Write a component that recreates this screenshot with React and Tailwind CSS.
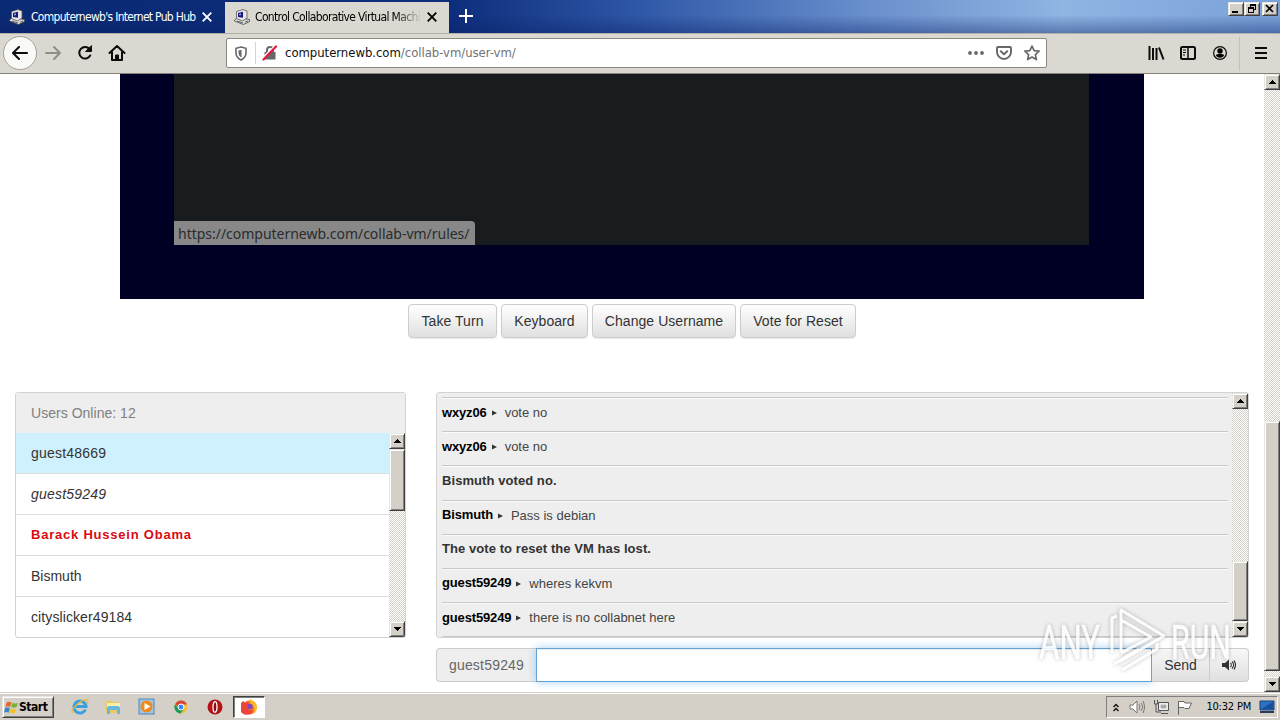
import { clsx } from 'clsx';

const users = [
  { name: 'guest48669', style: 'bg-[#cff1fd] text-[#333] tracking-[0.2px]' },
  { name: 'guest59249', style: 'italic text-[#333] tracking-[0.2px]' },
  { name: 'Barack Hussein Obama', style: 'font-bold text-[#d90a10] text-[13px] tracking-[0.78px]' },
  { name: 'Bismuth', style: 'text-[#333]' },
  { name: 'cityslicker49184', style: 'text-[#333] tracking-[0.1px]' },
];

const messages = [
  { user: 'wxyz06', text: 'vote no' },
  { user: 'wxyz06', text: 'vote no' },
  { notice: 'Bismuth voted no.' },
  { user: 'Bismuth', text: 'Pass is debian' },
  { notice: 'The vote to reset the VM has lost.' },
  { user: 'guest59249', text: 'wheres kekvm' },
  { user: 'guest59249', text: 'there is no collabnet here' },
];

const buttons = [
  { label: 'Take Turn', width: 'w-[89px]' },
  { label: 'Keyboard', width: 'w-[87px]' },
  { label: 'Change Username', width: 'w-[144px]' },
  { label: 'Vote for Reset', width: 'w-[116px]' },
];

const bevel = 'bg-[#d4d0c8] border border-t-[#e8e6e0] border-l-[#e8e6e0] border-r-[#404040] border-b-[#404040] shadow-[inset_1px_1px_0_#fff,inset_-1px_-1px_0_#808080]';

function ArrowButton({ down }) {
  return (
    <div className={clsx('h-4 w-4 shrink-0 flex items-center justify-center', bevel)}>
      <svg width="7" height="4" viewBox="0 0 7 4" shapeRendering="crispEdges">
        <path d={down ? 'M0 0h7v1H6v1H5v1H4v1H3V3H2V2H1V1H0z' : 'M3 0h1v1h1v1h1v1h1v1H0V3h1V2h1V1h1z'} />
      </svg>
    </div>
  );
}

function Scrollbar({ before, thumb, className }) {
  return (
    <div className={clsx('w-4 shrink-0 flex flex-col bg-[repeating-conic-gradient(#d4d0c8_0_25%,#fff_0_50%)] bg-[length:2px_2px]', className)}>
      <ArrowButton />
      <div className={before} />
      <div className={clsx('shrink-0', bevel, thumb)} />
      <div className="flex-1" />
      <ArrowButton down />
    </div>
  );
}

function ComputerIcon() {
  return (
    <svg className="shrink-0" width="16" height="16" viewBox="0 0 16 16">
      <path d="M.5 11l3-2.500 12 2v2l-6 3-9-3.500z" fill="#dcdcdc" stroke="#444" strokeWidth=".8" />
      <path d="M2.500 2.500L9 .5l4 1.500v7l-4.500 3-6-2.500z" fill="#e6e6e6" stroke="#555" strokeWidth=".8" />
      <path d="M4 4l5-1.200v6L4 8z" fill="#17177c" />
      <path d="M5 5l2-.7v2H5z" fill="#8fa2e8" />
      <path d="M3 12l6 2M11 13l3-1" stroke="#666" />
    </svg>
  );
}

function CloseIcon({ className }) {
  return (
    <svg className={clsx('shrink-0', className)} width="10" height="10" viewBox="0 0 10 10" fill="none" stroke="currentColor" strokeWidth="1.8">
      <path d="M.7.7l8.600 8.600M9.300.7L.7 9.300" />
    </svg>
  );
}

function TabBar() {
  return (
    <div className="h-[33px] flex bg-[linear-gradient(to_bottom,transparent_45%,rgba(10,30,100,0.4)),linear-gradient(to_right,#0b2a74_0%,#0c2d7b_35%,#2f58a8_50%,#6a90cd_68%,#8fb5e3_83%,#7aa2d9_100%)]">
      <div className="w-[225px] flex items-center pl-[9px] text-white">
        <ComputerIcon />
        <span className="ml-[6px] w-[167px] text-[12px] tracking-[-0.7px] whitespace-nowrap font-['DejaVu_Sans_Condensed','DejaVu_Sans',sans-serif] [font-stretch:condensed]">Computernewb's Internet Pub Hub</span>
        <CloseIcon className="ml-[4px]" />
      </div>
      <div className="w-[224px] mt-[2px] flex items-center pb-[2px] pl-[9px] bg-[#dbd8d1]">
        <ComputerIcon />
        <span className="ml-[5px] w-[167px] text-[12px] tracking-[-0.65px] whitespace-nowrap overflow-hidden font-['DejaVu_Sans_Condensed','DejaVu_Sans',sans-serif] [font-stretch:condensed] [mask-image:linear-gradient(to_right,black_84%,transparent)]">Control Collaborative Virtual Machi</span>
        <CloseIcon className="ml-[5px]" />
      </div>
      <svg className="ml-[10px] mt-[9px]" width="14" height="14" viewBox="0 0 14 14" stroke="#fff" strokeWidth="2">
        <path d="M7 0v14M0 7h14" />
      </svg>
      <div className="ml-auto mr-[2px] mt-[2px] flex h-[14px]">
        <div className={clsx('w-4', bevel)}>
          <svg width="14" height="12" viewBox="0 0 14 12"><path d="M3 8h6v2H3z" /></svg>
        </div>
        <div className={clsx('w-4', bevel)}>
          <svg width="14" height="12" viewBox="0 0 14 12" shapeRendering="crispEdges">
            <path d="M5 1h6v2H5zM10 3h1v4h-1zM9 6h1v1H9zM5 3h1v1H5zM3 4h6v2H3zM3 6h1v4H3zM8 6h1v4H8zM4 9h4v1H4z" />
          </svg>
        </div>
        <div className={clsx('w-4 ml-[2px]', bevel)}>
          <svg width="14" height="12" viewBox="0 0 14 12" stroke="#000" strokeWidth="1.7"><path d="M3 2l7 7M10 2L3 9" /></svg>
        </div>
      </div>
    </div>
  );
}

function Toolbar() {
  return (
    <div className="h-[41px] shrink-0 flex items-center bg-[#dbd8d1] border-t border-b border-t-[#b3b0aa] border-b-[#84817b]">
      <div className="ml-[3px] mt-[-1px] size-[34px] rounded-full border border-[#a5a29c] bg-[#f9f9f8] flex items-center justify-center">
        <svg width="16" height="14" viewBox="0 0 16 14" fill="none" stroke="#0c0c0d" strokeWidth="2" strokeLinecap="round" strokeLinejoin="round"><path d="M15 7H1.500M7 1L1 7l6 6" /></svg>
      </div>
      <svg className="ml-[8px] mt-[-1px]" width="16" height="14" viewBox="0 0 16 14" fill="none" stroke="#908e89" strokeWidth="2" strokeLinecap="round" strokeLinejoin="round"><path d="M1 7h13.500M9 1l6 6-6 6" /></svg>
      <svg className="ml-[16px] mt-[-1px]" width="16" height="16" viewBox="0 0 16 16" fill="none" stroke="#0c0c0d" strokeWidth="2" strokeLinecap="round">
        <path d="M13.200 10.500A5.800 5.800 0 1 1 12.500 4" />
        <path d="M14.500 1v5.500H9z" fill="#0c0c0d" strokeWidth="1" strokeLinejoin="round" />
      </svg>
      <svg className="ml-[15px] mt-[-1px]" width="18" height="16" viewBox="0 0 18 16" fill="none" stroke="#0c0c0d" strokeWidth="2" strokeLinecap="round" strokeLinejoin="round">
        <path d="M1.500 8L9 1l7.500 7M4 7v8h10V7" />
        <path d="M7.500 15v-5h3v5" fill="#0c0c0d" strokeWidth="1" />
      </svg>

      <div className="ml-[100px] mt-[-1px] w-[821px] h-[30px] flex items-center rounded-[2px] border border-[#8c8983] bg-white">
        <svg className="ml-[8px]" width="12" height="15" viewBox="0 0 12 15" fill="none" stroke="#68686b" strokeWidth="1.6">
          <path d="M6 1l5 1.300V7c0 3.500-2 5.500-5 7-3-1.500-5-3.500-5-7V2.300z" />
          <path d="M6 4v7c-2-1-2.500-2.500-2.500-4V4.500z" fill="#68686b" stroke="none" />
          <path d="M6 4v7" strokeWidth="1" />
        </svg>
        <div className="ml-[8px] h-[22px] w-px bg-[#d5d5d5]" />
        <svg className="ml-[6px]" width="16" height="16" viewBox="0 0 16 16">
          <path d="M5 7V5a3 3 0 0 1 6 0v2" fill="none" stroke="#68686b" strokeWidth="2" />
          <path d="M2.500 7h11v7.500h-11z" fill="#68686b" />
          <path d="M0 14L13 1" stroke="#fff" strokeWidth="2" />
          <path d="M1.500 14.500L14 1.500" stroke="#e5183f" strokeWidth="2.200" strokeLinecap="round" />
        </svg>
        <div className="ml-[7px] text-[13px] tracking-[-0.04px] whitespace-nowrap font-['DejaVu_Sans_Condensed','DejaVu_Sans',sans-serif] [font-stretch:condensed] text-[#737373]">
          <span className="text-[#111]">computernewb.com</span>/collab-vm/user-vm/
        </div>
        <svg className="ml-auto" width="16" height="4" viewBox="0 0 16 4" fill="#68686b">
          <circle cx="2" cy="2" r="1.900" />
          <circle cx="8" cy="2" r="1.900" />
          <circle cx="14" cy="2" r="1.900" />
        </svg>
        <svg className="ml-[12px]" width="16" height="14" viewBox="0 0 16 14" fill="none" stroke="#68686b" strokeWidth="1.900" strokeLinecap="round" strokeLinejoin="round">
          <path d="M2 1h12a1 1 0 0 1 1 1v4a7 7 0 0 1-14 0V2a1 1 0 0 1 1-1z" />
          <path d="M4.800 5.200L8 8.300l3.200-3.100" />
        </svg>
        <svg className="ml-[12px] mr-[6px]" width="16" height="16" viewBox="0 0 16 16" fill="none" stroke="#68686b" strokeWidth="1.700" strokeLinejoin="round">
          <path d="M8 1l2.100 4.600 5 .6-3.700 3.400 1 5L8 12.100l-4.400 2.500 1-5L.9 6.200l5-.6z" />
        </svg>
      </div>

      <svg className="ml-auto mt-[-1px]" width="17" height="14" viewBox="0 0 17 14" stroke="#0c0c0d" strokeWidth="2">
        <path d="M1.500 0v14M5 2v12M8.500 2v12M11 1.500l4.500 12" />
      </svg>
      <svg className="ml-[15px] mt-[-1px]" width="16" height="14" viewBox="0 0 16 14" fill="none" stroke="#0c0c0d" strokeWidth="2">
        <rect x="1" y="1" width="14" height="12" rx="1.500" />
        <path d="M8 1v12" strokeWidth="1.500" />
        <path d="M3 4h3M3 6.500h3M3 9h2" strokeWidth="1" />
      </svg>
      <svg className="ml-[17px] mt-[-1px]" width="14" height="14" viewBox="0 0 14 14">
        <circle cx="7" cy="7" r="6.400" fill="none" stroke="#0c0c0d" strokeWidth="1.200" />
        <circle cx="7" cy="5" r="2.700" />
        <path d="M2.800 9c2-1.200 6.400-1.200 8.400 0-.7 1.700-2.500 2.800-4.200 2.800S3.500 10.700 2.800 9z" />
      </svg>
      <div className="ml-[12px] h-[34px] w-px bg-[#c4c1ba]" />
      <svg className="ml-[15px] mr-[13px] mt-[-1px]" width="12" height="12" viewBox="0 0 12 12" stroke="#0c0c0d" strokeWidth="2"><path d="M0 1h12M0 6h12M0 11h12" /></svg>
    </div>
  );
}

function UserList() {
  return (
    <div className="w-[391px] h-[246px] flex flex-col rounded-[3px] border border-[#d3d3d3] overflow-hidden text-sm">
      <div className="h-10 shrink-0 pl-[15px] flex items-center bg-[#eee] text-[#808080] tracking-[0.03px]">Users Online: 12</div>
      <div className="flex-1 flex min-h-0">
        <div className="flex-1">
          {users.map((user) => (
            <div key={user.name} className={clsx('h-[41px] pl-[15px] flex items-center border-b border-[#ddd]', user.style)}>{user.name}</div>
          ))}
        </div>
        <Scrollbar thumb="h-[62px]" />
      </div>
    </div>
  );
}

function Chat() {
  return (
    <div className="w-[813px]">
      <div className="h-[246px] flex rounded-[3px] border border-[#d3d3d3] bg-[#eee] overflow-hidden text-[13px]">
        <div className="flex-1 pl-[5px] pr-[4px] pt-[4px]">
          {messages.map((message, i) => (
            <div key={i} className="h-[34.200px] pt-[5px] border-t border-[#c8c8c8] shadow-[inset_0_1px_0_#fafafa] whitespace-nowrap">
              {message.notice ? (
                <b className="block mt-[-0.500px] text-[#333] text-[13px] tracking-[0.07px]">{message.notice}</b>
              ) : (
                <div className="flex">
                  <b className="mt-[-0.500px] text-black tracking-[-0.15px]">{message.user}</b>
                  <svg className="ml-[5px] mt-[7px]" width="5" height="6" viewBox="0 0 5 6" fill="#333"><path d="M0 .5L5 3 0 5.500z" /></svg>
                  <span className="ml-[8px] text-[#444]">{message.text}</span>
                </div>
              )}
            </div>
          ))}
          <div className="h-px bg-[#c8c8c8]" />
        </div>
        <Scrollbar before="h-[152px]" thumb="h-[60px]" />
      </div>
      <div className="mt-[10px] h-[34px] flex text-sm">
        <div className="w-[100px] rounded-l-[4px] border border-r-0 border-[#ccc] bg-[#eee] flex items-center justify-center text-[#666] tracking-[0.2px]">guest59249</div>
        <div className="w-[616px] border border-[#66a3d2] bg-white shadow-[0_0_8px_rgba(102,175,233,0.6),inset_0_1px_1px_rgba(0,0,0,0.08)]" />
        <div className="w-[58px] border-y border-r border-[#ccc] bg-gradient-to-b from-[#f7f7f7] to-[#e0e0e0] flex items-center justify-center text-[#333]">Send</div>
        <div className="w-[39px] rounded-r-[4px] border border-l-0 border-[#ccc] bg-gradient-to-b from-[#f7f7f7] to-[#e0e0e0] flex items-center justify-center">
          <svg width="14" height="12" viewBox="0 0 14 12" fill="none" stroke="#333" strokeWidth="1.200">
            <path d="M0 4h3l4-3.500v11L3 8H0z" fill="#333" stroke="none" />
            <path d="M8.500 4c1 1 1 3 0 4M10 2.500c2 2 2 5 0 7M12 1.500c2 3 2 6 0 9" />
          </svg>
        </div>
      </div>
    </div>
  );
}

function Watermark() {
  return (
    <svg className="absolute left-[1034px] top-[604px] opacity-85 drop-shadow-[0_0_2px_rgba(0,0,0,0.3)]" width="204" height="72" viewBox="0 0 204 72" fill="none" stroke="#fff" strokeWidth="3" strokeLinejoin="round">
      <text x="5" y="55" textLength="61" lengthAdjust="spacingAndGlyphs" className="font-[Roboto,sans-serif] text-[49px]" fill="#fff" strokeWidth=".5">ANY</text>
      <text x="137" y="55" textLength="60" lengthAdjust="spacingAndGlyphs" className="font-[Roboto,sans-serif] text-[49px]" fill="#fff" strokeWidth=".5">RUN</text>
      <path d="M78 49V14l5-2M87 48V6l43 26-45 26M87 16l30 17-30 16M80 60l25-15M88 66l35-21v-6" />
    </svg>
  );
}

function Taskbar() {
  return (
    <div className="h-[28px] shrink-0 flex items-center bg-[#d4d0c8] border-t border-[#d4d0c8] shadow-[inset_0_1px_0_#fff]">
      <div className={clsx('ml-[2px] mt-[1px] w-[52px] h-[22px] flex items-center pl-[1px]', bevel)}>
        <svg className="shrink-0" width="15" height="15" viewBox="0 0 16 15">
          <path d="M3 2c2-1 3-1 5 0L6.500 7c-2-1-3-1-5 0z" fill="#ea6427" />
          <path d="M9 2.500c2 1 4 1 6 0L13.500 7c-2 1-4 1-6 0z" fill="#78b43c" />
          <path d="M1.200 8c2-1 3-1 5 0L5 13c-2-1-3-1-5 0z" fill="#3a86cc" />
          <path d="M7.200 8.500c2 1 4 1 6 0L11.700 13c-2 1-4 1-6 0z" fill="#f5bf28" />
        </svg>
        <span className="text-[12px] font-bold tracking-[-0.45px] font-['DejaVu_Sans_Condensed','DejaVu_Sans',sans-serif] [font-stretch:condensed]">Start</span>
      </div>
      <svg className="ml-[17px]" width="18" height="17" viewBox="0 0 18 17" fill="none">
        <path d="M14.500 11.500A6 6 0 1 1 15 8.500H5" stroke="#3ba1dc" strokeWidth="3" />
        <path d="M1.500 15C-1 12 11 0 16.500 2c1 1 0 3-.5 4" stroke="#e8b83a" strokeWidth="1.300" />
      </svg>
      <svg className="ml-[16px]" width="17" height="16" viewBox="0 0 17 16">
        <path d="M1 2h6l1 1h7v11H1z" fill="#ebc961" />
        <path d="M2 4h13v4H2z" fill="#fbefb0" />
        <path d="M2 15V9c0-1 1-2 2-2h9c1 0 2 1 2 2v6h-3v-4H5v4z" fill="#67b9df" />
      </svg>
      <svg className="ml-[16px]" width="17" height="17" viewBox="0 0 17 17">
        <rect x="1" y="1" width="15" height="15" fill="#9dc5e7" stroke="#4f86b9" />
        <circle cx="8.500" cy="8.500" r="6" fill="#f08a1c" />
        <path d="M6.500 5l6 3.500-6 3.500z" fill="#fff" />
      </svg>
      <svg className="ml-[18px]" width="16" height="16" viewBox="0 0 16 16">
        <circle cx="8" cy="8" r="6.500" fill="#f1c232" />
        <path d="M2.200 5A6.500 6.500 0 0 1 14 5.500H8L6 9z" fill="#db4437" />
        <path d="M2 5.200A6.500 6.500 0 0 0 7.500 14.500L11 10l-5.500-.5z" fill="#169c57" />
        <circle cx="8" cy="8" r="3" fill="#4285f4" stroke="#fff" />
      </svg>
      <svg className="ml-[18px]" width="16" height="16" viewBox="0 0 16 16">
        <circle cx="8" cy="8" r="7.500" fill="#b31217" />
        <ellipse cx="8" cy="8" rx="2" ry="5.300" fill="#8d0b10" stroke="#fff" strokeWidth="1.300" />
      </svg>
      <div className="ml-[10px] w-[32px] h-[22px] flex items-center justify-center bg-white border border-t-[#404040] border-l-[#404040] border-r-white border-b-white shadow-[inset_1px_1px_0_#808080]">
        <svg width="17" height="17" viewBox="0 0 17 17">
          <circle cx="8.500" cy="9.500" r="7" fill="#ff6a2b" />
          <path d="M9 1c3 2 7 3 7 8a7 7 0 0 1-4 6.500c2-5 1-8-3-10z" fill="#ffb524" />
          <path d="M2.500 3l1.500 2 3-.5 2 3-2 4 5 1.500-3 3A7 7 0 0 1 2.500 3z" fill="#f0453a" />
          <circle cx="9" cy="8.500" r="2.700" fill="#7d48c4" />
        </svg>
      </div>
      <div className="ml-auto mr-[2px] mt-px w-[172px] h-[22px] flex items-center border border-t-[#808080] border-l-[#808080] border-r-white border-b-white">
        <svg className="ml-[6px]" width="6" height="9" viewBox="0 0 6 9" fill="none" stroke="#111" strokeWidth="1.400"><path d="M.5 4L3 1.500 5.500 4M.5 8L3 5.500 5.500 8" /></svg>
        <svg className="ml-[10px]" width="16" height="14" viewBox="0 0 16 14" fill="none" stroke="#777">
          <path d="M1 5h3l4-4v12L4 9H1z" fill="#fff" />
          <path d="M10 4c1 2 1 4 0 6M12 3c2 3 2 5 0 8M14 1c2 4 2 8 0 12" />
        </svg>
        <svg className="ml-[8px]" width="17" height="16" viewBox="0 0 17 16" fill="none" stroke="#555">
          <path d="M5.500 3.500h10v8h-10z" fill="#ddd" />
          <path d="M7 5h7v5H7z" fill="#aaa" stroke="#fff" />
          <path d="M8 14.500h7M1.500 1v4h3V1M3 5v8h5" />
        </svg>
        <svg className="ml-[7px]" width="16" height="15" viewBox="0 0 16 15" fill="#fff" stroke="#666"><path d="M1.500 15V1M2 1.500h5l1 1.500h6.500L12 8.500H8L7 7.500H2" /></svg>
        <span className="ml-auto text-[11px] tracking-[-0.2px] whitespace-nowrap font-['DejaVu_Sans_Condensed','DejaVu_Sans',sans-serif] [font-stretch:condensed]">10:32 PM</span>
        <svg className="ml-[8px] mr-[2px]" width="16" height="14" viewBox="0 0 16 14">
          <path d="M1 1h14v9H1z" fill="#2b72c5" stroke="#1b3e75" />
          <path d="M2 9l12-7v7z" fill="#174f9b" />
          <path d="M1 11h14v2H1z" fill="#293c58" />
        </svg>
      </div>
    </div>
  );
}

export default function App() {
  return (
    <div className="relative w-[1280px] h-[720px] flex flex-col overflow-hidden bg-white font-['Liberation_Sans',Arial,sans-serif]">
      <TabBar />
      <Toolbar />
      <div className="h-[618px] flex">
        <main className="flex-1">
          <div className="mx-auto w-[1024px] h-[225px] bg-[#000024] pl-[54px]">
            <div className="w-[915px] h-[171px] flex items-end bg-[#181c1e]">
              <div className="w-[301px] h-[24px] flex items-center pl-[4px] rounded-tr-[4px] bg-[#888] text-[#292c2e] text-[14px] tracking-[-0.02px] whitespace-nowrap font-['Noto_Sans',sans-serif]">https://computernewb.com/collab-vm/rules/</div>
            </div>
          </div>
          <div className="mt-[5px] h-[34px] flex justify-center gap-1 text-sm text-[#333]">
            {buttons.map((button) => (
              <button key={button.label} className={clsx('rounded-[4px] border border-[#ccc] bg-gradient-to-b from-white to-[#e0e0e0] shadow-[0_1px_1px_rgba(0,0,0,0.08)] whitespace-nowrap tracking-[0.06px]', button.width)}>{button.label}</button>
            ))}
          </div>
          <div className="mt-[54px] px-[15px] flex gap-[30px]">
            <UserList />
            <Chat />
          </div>
        </main>
        <Scrollbar before="h-[331px]" thumb="h-[250px]" />
      </div>
      <Taskbar />
      <Watermark />
    </div>
  );
}
